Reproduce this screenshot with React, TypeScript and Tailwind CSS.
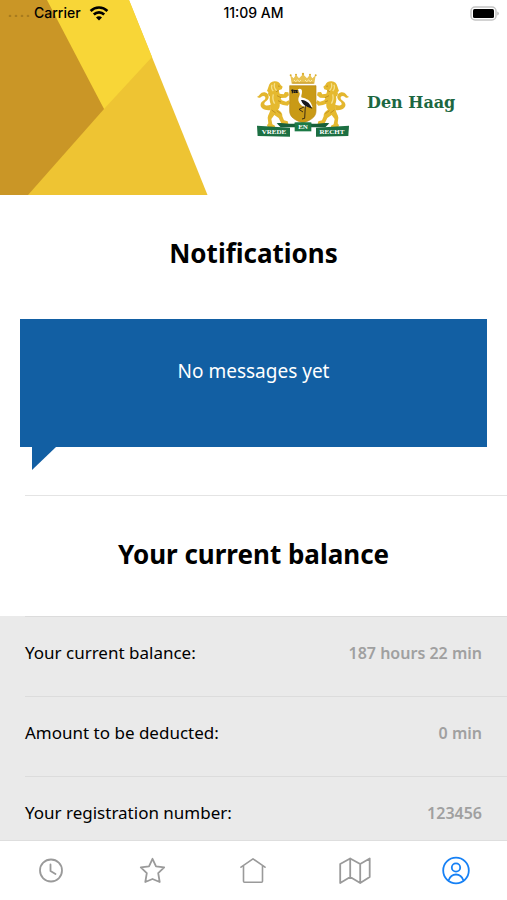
import type { ReactNode } from "react";

const rows = [
  { label: "Your current balance:", value: "187 hours 22 min" },
  { label: "Amount to be deducted:", value: "0 min" },
  { label: "Your registration number:", value: "123456" },
];

const StatusBar = () => {
  return (
    <div className="absolute inset-x-0 top-0 grid h-[26px] grid-cols-3 items-center px-2 font-['Inter',sans-serif] text-sm font-medium text-black">
      <div className="flex items-center gap-1">
        <svg width="22" height="8" viewBox="0 0 22 8" fill="#a87c1e">
          <circle cx="2" cy="7" r="1.300" />
          <circle cx="8" cy="7" r="1.300" />
          <circle cx="14" cy="7" r="1.300" />
          <circle cx="20" cy="7" r="1.300" />
        </svg>
        <span>Carrier</span>
        <svg className="ml-1" width="20" height="15" viewBox="0 0 20 15" fill="none" stroke="#000" strokeWidth="2.6">
          <path d="M1.600 5a12 12 0 0 1 16.800 0" />
          <path d="M4.800 8.500a7.400 7.400 0 0 1 10.400 0" />
          <path d="M10 14.400l-3-3a4.200 4.200 0 0 1 6 0z" fill="#000" stroke="none" />
        </svg>
      </div>
      <span className="text-center">11:09 AM</span>
      <svg className="justify-self-end" width="29" height="15" viewBox="0 0 29 15">
        <rect x="1" y="1" width="25" height="13" rx="4" fill="#fff" stroke="#c4c4c4" strokeWidth="1.500" />
        <rect x="3" y="3" width="21" height="9" rx="1.500" fill="#000" />
        <path d="M27.500 5.500v4a2.400 2.400 0 0 0 0-4z" fill="#999" />
      </svg>
    </div>
  );
};

const Lion = () => {
  return (
    <g>
      {/* Tail */}
      <path
        d="M76 150c-16 3-33-5-30-18 2-9 13-10 14-17 1-8-8-9-13-4-4 4-9 3-12-1 6-1 7-8 14-12 10-5 23 2 21 15-2 9-14 12-13 19 1 5 9 6 20 2z"
        fill="#e3b62e"
      />
      {/* Head, body and legs */}
      <path
        d="M70 79c1-8 8-14 17-15 9-1 17 4 19 11l6 5-3 8-9 3 3 10 12 2 4-7 10 1 2 9-9 7-16 1 3 7 13 4 8-4 4 8-7 8-14-2-10-4c1 8-1 13-5 18 8 4 14 11 13 20l5 12 11 3 2 8h-20l-9-18-13-9-9 12 3 16 8 4v8H69l-4-9 4-6-2-17c1-10 7-15 8-24l1-17c-3-8-4-15-2-22-5-3-7-8-5-14l-4-3z"
        fill="#e5b92f"
      />
      <path d="M80 74c-3 8-1 14 4 19M88 70c-3 9 0 17 6 22M84 103c-3 11-1 20 4 28" fill="none" stroke="#f5df88" strokeWidth="4" />
      <path d="M98 78l5 1M100 91l-8 4M95 107l12 6M98 122l9 4M79 150l12 9M94 152l12 9" fill="none" stroke="#b98a1d" strokeWidth="2.500" />
    </g>
  );
};

const Crest = () => {
  return (
    <svg width="95" height="66" viewBox="32 36 285 198" role="img" aria-label="Den Haag coat of arms">
      <Lion />
      <g transform="translate(346 0) scale(-1 1)">
        <Lion />
      </g>
      {/* Crown */}
      <path d="M139 71l-4-25 10 9 7-11 9 11 12-12 12 12 9-11 7 11 10-9-4 25z" fill="#e9c352" />
      <path d="M146 60l5 5 6-5 5 5 5-5M179 60l5 5 6-5 5 5 5-5" fill="none" stroke="#fff3c2" strokeWidth="2.500" />
      <path d="M141 69h64" fill="none" stroke="#b98a1d" strokeWidth="2.500" />
      <g fill="#dcae2c">
        <circle cx="136" cy="46" r="3" />
        <circle cx="152" cy="44" r="3" />
        <circle cx="173" cy="42" r="3.500" />
        <circle cx="194" cy="44" r="3" />
        <circle cx="211" cy="46" r="3" />
      </g>
      {/* Shield with the stork */}
      <path d="M133 77h79v76c0 19-17 28-39 36-23-8-40-17-40-36z" fill="#c99a16" stroke="#b98a1d" strokeWidth="2" />
      <path d="M158 88c6-4 13 0 12 8 0 6-3 10-2 16 10 3 24 6 29 18l5 12-15-4c-7 4-17 2-22-5-7-8-8-17-3-26 2-5 2-9-2-11z" fill="#fff" />
      <path d="M167 120c11 0 23 6 28 16l6 10-16-6c-8-3-14-9-18-20z" fill="#17171c" />
      <path d="M159 93l-20-3 3 6 16 1M141 89v11M147 99l3-9M153 99l1-9" fill="none" stroke="#17171c" strokeWidth="3" />
      <path d="M180 138l-2 37-8 2M176 141l-15 7 12 8" fill="none" stroke="#3b2b13" strokeWidth="3" />
      {/* Ribbon */}
      <path d="M94 190c24-5 42 7 60-2h38c18 9 36-3 60 2l-12 12H106z" fill="#17603a" />
      <path d="M148 187h50v27h-50z" fill="#1c7a46" />
      <path d="M35 197l99 6v27l-97-2z" fill="#1c6f42" />
      <path d="M311 197l-99 6v27l97-2z" fill="#1c6f42" />
      <g fill="#fff" fontFamily="Liberation Serif, serif" fontWeight="700" fontSize="21" textAnchor="middle">
        <text x="86" y="222">VREDE</text>
        <text x="173" y="208">EN</text>
        <text x="260" y="222">RECHT</text>
      </g>
    </svg>
  );
};

const Header = () => {
  return (
    <header className="relative flex items-start">
      <svg className="shrink-0" width="208" height="195" viewBox="0 0 208 195">
        <path d="M0 0h129l78.500 195H0z" fill="#eec433" />
        <path d="M40 0h89l23 57-48 52z" fill="#f8d637" />
        <path d="M0 0h47l57 109-76 86H0z" fill="#ca9626" />
      </svg>
      <div className="ml-12 mt-18 flex items-center gap-4">
        <Crest />
        <span className="pb-1 font-['DejaVu_Serif',serif] text-base font-bold text-[#1c6741]">Den Haag</span>
      </div>
      <StatusBar />
    </header>
  );
};

const TabIcon = ({ children }: { children: ReactNode }) => (
  <svg
    width="32"
    height="32"
    viewBox="0 0 32 32"
    fill="none"
    stroke="currentColor"
    strokeWidth="1.8"
    strokeLinecap="round"
    strokeLinejoin="round"
  >
    {children}
  </svg>
);

const tabs = [
  {
    name: "Hours",
    icon: (
      <>
        <circle cx="16" cy="15.500" r="11" />
        <path d="M15.500 9.500v6.500l5 3" />
      </>
    ),
  },
  {
    name: "Favourites",
    icon: (
      <path d="M16.500 3.800l3.500 7.500 8.200 1.100-6 5.700 1.500 8.900-7.200-3-7.200 3 1.500-8.900-6-5.700 8.200-1.100z" />
    ),
  },
  {
    name: "Home",
    icon: <path d="M4 12.200L16 3.800l12 8.400M6.500 10.800V26.200a1 1 0 0 0 1 1h17a1 1 0 0 0 1-1V10.800" strokeWidth="1.600" />,
  },
  {
    name: "Map",
    icon: <path d="M1.200 9l10-5.500 10 5.500 9.500-5.500v18.500l-9.500 6-10-6-10 6zM11.200 3.500v18.500M21.200 9v19" strokeWidth="1.800" />,
  },
  {
    name: "Profile",
    active: true,
    icon: (
      <>
        <circle cx="16" cy="15.500" r="12.800" />
        <circle cx="16" cy="12.500" r="4.200" />
        <path d="M8.500 25.500c1.500-4 4-6 7.500-6s6 2 7.500 6" />
      </>
    ),
  },
];

const TabBar = () => {
  return (
    <nav className="grid h-15 shrink-0 grid-cols-5 border-t border-[#dedede] bg-white">
      {tabs.map((tab) => (
        <button
          key={tab.name}
          aria-label={tab.name}
          className={tab.active ? "flex items-center justify-center text-[#1781f5]" : "flex items-center justify-center text-[#9a9a9a]"}
        >
          <TabIcon>{tab.icon}</TabIcon>
        </button>
      ))}
    </nav>
  );
};

const App = () => {
  return (
    <div className="flex h-screen flex-col bg-white font-['Noto_Sans',sans-serif] text-black">
      <main className="min-h-0 flex-1 overflow-y-auto [scrollbar-width:none]">
        <Header />

        {/* Notifications */}
        <section className="pt-9">
          <h1 className="text-center text-[26px] leading-11 font-bold">Notifications</h1>
          <div className="mx-5 mt-11 h-32 bg-[#125fa3] pt-9 text-center text-[19px] leading-8 text-white">
            No messages yet
          </div>
          <svg className="ml-8 block" width="24" height="24" viewBox="0 0 24 24" fill="#125fa3">
            <path d="M0 0h24L0 23z" />
          </svg>
        </section>

        {/* Balance */}
        <section className="pt-6">
          <h2 className="ml-[25px] border-t border-[#e4e4e4] pr-[25px] pt-9 pb-10 text-center text-[26px] leading-11 font-bold">
            Your current balance
          </h2>
          <dl className="bg-[#eaeaea]">
            {rows.map((row) => (
              <div
                key={row.label}
                className="ml-[25px] flex h-20 items-center justify-between border-t border-[#dcdcdc] pr-[25px] pb-2"
              >
                <dt className="text-[17px]">{row.label}</dt>
                <dd className="text-base font-semibold text-[#a0a0a0]">{row.value}</dd>
              </div>
            ))}
          </dl>
        </section>
      </main>
      <TabBar />
    </div>
  );
};

export default App;
